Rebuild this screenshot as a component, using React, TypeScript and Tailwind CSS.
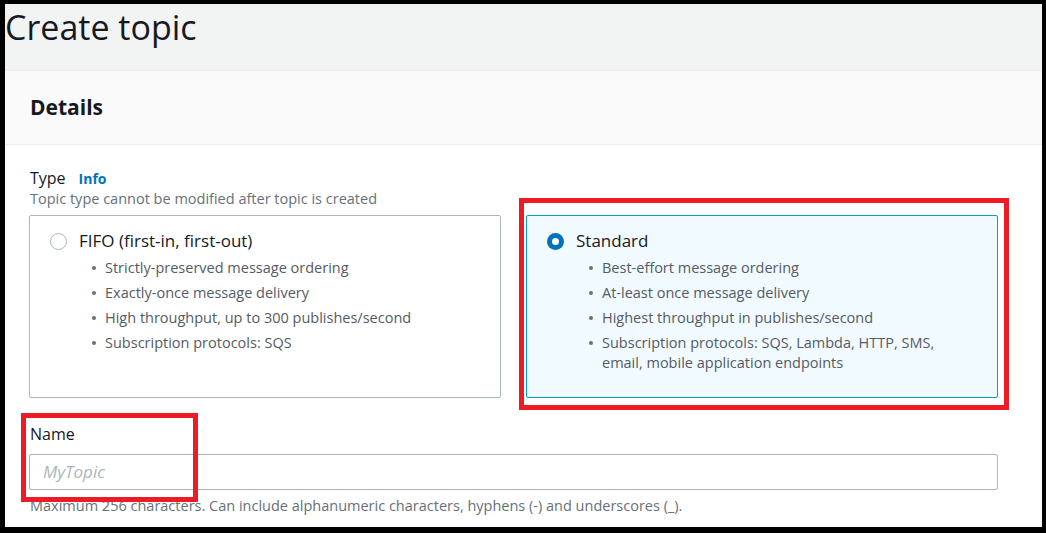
import type { ReactNode } from "react";

const font = { fontFamily: "'Open Sans', 'Noto Sans', Arial, sans-serif" };

interface OptionCardProps {
  label: string;
  selected?: boolean;
  items: ReactNode[];
}

function OptionCard({ label, selected, items }: OptionCardProps) {
  return (
    <div
      className={
        selected
          ? "h-[183px] rounded-[2px] border border-[#00a1c9] bg-[#f1faff] pl-[20px] pt-[14px]"
          : "h-[183px] rounded-[2px] border border-[#aab7b8] bg-white pl-[20px] pt-[14px]"
      }
    >
      <div className="flex items-center gap-[12px]">
        {selected ? (
          <span className="flex h-[17px] w-[17px] items-center justify-center rounded-full bg-[#0073bb]">
            <span className="h-[7px] w-[7px] rounded-full bg-white" />
          </span>
        ) : (
          <span className="h-[17px] w-[17px] rounded-full border-[1.5px] border-[#aab7b8] bg-white" />
        )}
        <span className="text-[17px] leading-[22px] text-[#16191f]">{label}</span>
      </div>
      <ul className="mt-[6px] flex flex-col gap-[5px] pl-[42px]">
        {items.map((item, i) => (
          <li key={i} className="flex text-[14.5px] leading-[20px] text-[#545b64]">
            <span className="mr-[9px] mt-[8px] h-[4px] w-[4px] shrink-0 rounded-full bg-[#687078]" />
            <span>{item}</span>
          </li>
        ))}
      </ul>
    </div>
  );
}

export default function App() {
  return (
    <div
      style={font}
      className="relative h-[533px] w-[1046px] overflow-hidden border-t-[4px] border-r-[4px] border-b-[6px] border-l-[5px] border-black bg-white"
    >
      <div className="h-[67px] border-b border-[#eaeded] bg-[#f2f3f3]">
        <h1 className="text-[34px] leading-[46px] text-[#16191f]">Create topic</h1>
      </div>

      <div className="flex h-[74px] items-center border-b border-[#eaeded] bg-[#fafafa] pl-[25px]">
        <h2 className="text-[21px] font-bold text-[#16191f]">Details</h2>
      </div>

      <div className="pl-[24px] pr-[44px] pt-[23px]">
        <div className="flex items-baseline gap-[13px] pl-[1px]">
          <span className="text-[16px] leading-[20px] text-[#16191f]">Type</span>
          <span className="text-[14px] font-bold text-[#0073bb]">Info</span>
        </div>
        <div className="pl-[1px] text-[14.5px] leading-[20px] text-[#687078]">
          Topic type cannot be modified after topic is created
        </div>

        <div className="mt-[6px] grid grid-cols-2 gap-[25px]">
          <OptionCard
            label="FIFO (first-in, first-out)"
            items={[
              "Strictly-preserved message ordering",
              "Exactly-once message delivery",
              "High throughput, up to 300 publishes/second",
              "Subscription protocols: SQS",
            ]}
          />
          <OptionCard
            label="Standard"
            selected
            items={[
              "Best-effort message ordering",
              "At-least once message delivery",
              "Highest throughput in publishes/second",
              <>
                Subscription protocols: SQS, Lambda, HTTP, SMS,
                <br />
                email, mobile application endpoints
              </>,
            ]}
          />
        </div>

        <div className="mt-[26px] pl-[1px] text-[16px] leading-[20px] text-[#16191f]">Name</div>
        <div className="mt-[10px] flex h-[36px] items-center rounded-[2px] border border-[#aab7b8] px-[13px]">
          <span className="text-[17px] italic text-[#aab7b8]">MyTopic</span>
        </div>
        <div className="mt-[6px] pl-[1px] text-[14.5px] leading-[20px] text-[#687078]">
          Maximum 256 characters. Can include alphanumeric characters, hyphens (-) and underscores (_).
        </div>
      </div>

      {/* annotation boxes */}
      <div className="absolute left-[514px] top-[194px] h-[212px] w-[490px] border-[5px] border-[#ed1c24]" />
      <div className="absolute left-[16px] top-[409px] h-[89px] w-[177px] border-[5px] border-[#ed1c24]" />
    </div>
  );
}
